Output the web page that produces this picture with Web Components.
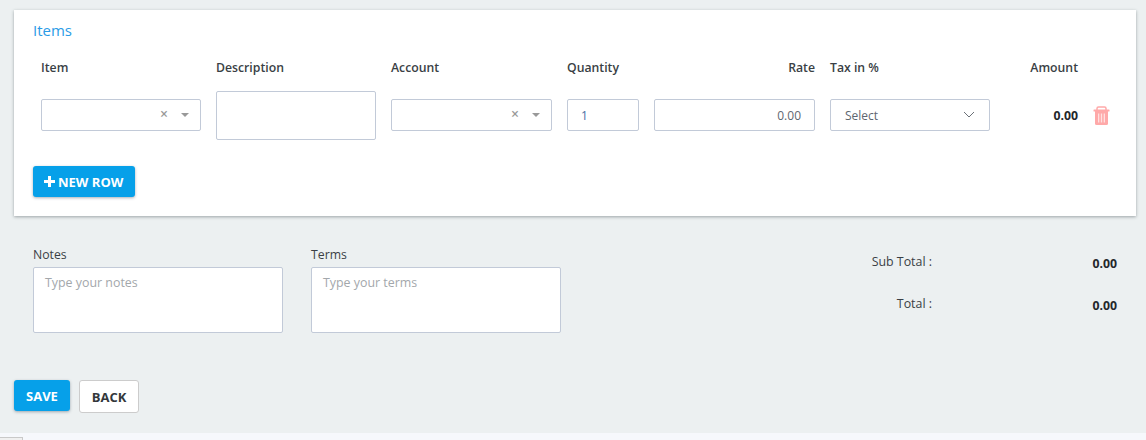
<!DOCTYPE html>
<html lang="en">
<head>
<meta charset="utf-8">
<title>Items</title>
<style>
  html, body { margin: 0; height: 440px; overflow: hidden; }
  body { background: #f6f8fc; font-family: "Open Sans", sans-serif; color: #3a3f45; }
</style>
</head>
<body>
<invoice-page>
  <items-card slot="card">
    <span slot="title">Items</span>
    <grid-label>Item</grid-label>
    <grid-label>Description</grid-label>
    <grid-label>Account</grid-label>
    <grid-label>Quantity</grid-label>
    <grid-label align="right">Rate</grid-label>
    <grid-label>Tax in %</grid-label>
    <grid-label align="right">Amount</grid-label>
    <span></span>

    <combo-box></combo-box>
    <text-box tall></text-box>
    <combo-box></combo-box>
    <text-box value="1" accent></text-box>
    <text-box value="0.00" align="right"></text-box>
    <tax-select>Select</tax-select>
    <amount-value>0.00</amount-value>
    <trash-icon></trash-icon>

    <action-button slot="action" kind="primary" plus>NEW ROW</action-button>
  </items-card>

  <note-box slot="notes" label="Notes" placeholder="Type your notes"></note-box>
  <note-box slot="notes" label="Terms" placeholder="Type your terms"></note-box>

  <total-line slot="totals" label="Sub Total :" value="0.00"></total-line>
  <total-line slot="totals" label="Total :" value="0.00"></total-line>

  <action-button slot="buttons" kind="primary">SAVE</action-button>
  <action-button slot="buttons" kind="plain">BACK</action-button>
</invoice-page>

<script>
// small helper so each element just declares its css and markup
function define(name, css, html) {
  customElements.define(name, class extends HTMLElement {
    constructor() {
      super();
      const root = this.attachShadow({ mode: "open" });
      root.innerHTML = `<style>${css}</style>${typeof html === "function" ? html(this) : html}`;
    }
  });
}

define("invoice-page", `
  :host { display: block; height: 433px; background: #ecf0f1; padding: 10px 10px 0 14px; box-sizing: border-box; position: relative; }
  .bottom { display: flex; justify-content: space-between; padding: 31px 0 0 19px; }
  .notes { display: flex; gap: 28px; }
  .totals { width: 246px; margin-right: 19px; padding-top: 7px; }
  .buttons { display: flex; align-items: flex-start; gap: 9px; margin-top: 42px; }
  .corner { position: absolute; left: 0; top: 437px; width: 23px; height: 3px; border: 1px solid #c9c9c9; border-left: 0; border-bottom: 0; background: #f0f0f0; box-sizing: border-box; }
`, `
  <slot name="card"></slot>
  <div class="bottom">
    <div class="notes"><slot name="notes"></slot></div>
    <div class="totals"><slot name="totals"></slot></div>
  </div>
  <div class="buttons"><slot name="buttons"></slot></div>
  <div class="corner"></div>
`);

define("items-card", `
  :host { display: block; width: 1122px; height: 206px; background: #fff; box-sizing: border-box; padding: 10px 19px 0; box-shadow: 0 1px 3px rgba(60,70,75,.45); }
  .title { font-size: 15px; line-height: 20px; color: #2a9be6; }
  .grid { display: grid; grid-template-columns: 160px 160px 161px 72px 161px 160px 73px 24px; column-gap: 15px; row-gap: 0; margin: 0 0 0 8px; grid-template-rows: 28px 60px; padding-top: 17px; align-items: center; }
  .action { margin-top: 21px; }
`, `
  <div class="title"><slot name="title"></slot></div>
  <div class="grid"><slot></slot></div>
  <div class="action"><slot name="action"></slot></div>
`);

define("grid-label", `
  :host { display: block; font-size: 12.25px; font-weight: 600; line-height: 16px; color: #3a3f45; align-self: start; margin-top: 3px; }
  :host([align="right"]) { text-align: right; }
`, `<slot></slot>`);

define("combo-box", `
  :host { display: flex; align-items: center; justify-content: flex-end; height: 32px; box-sizing: border-box; background: #fff; border: 1px solid #c2cad8; border-radius: 2px; padding-right: 11px; }
  .x { font-size: 14px; font-weight: 600; line-height: 14px; color: #999; margin-right: 13px; margin-top: -3px; }
  .arrow { width: 0; height: 0; border: 4px solid transparent; border-top-color: #999; border-bottom: 0; margin-top: -1px; }
`, `<span class="x">×</span><span class="arrow"></span>`);

define("text-box", `
  :host { display: flex; align-items: center; height: 32px; box-sizing: border-box; background: #fff; border: 1px solid #c2cad8; border-radius: 2px; padding: 0 13px; font-size: 12px; color: #5e6670; }
  :host([tall]) { height: 49px; margin-top: 1px; }
  :host([align="right"]) { justify-content: flex-end; }
  :host([accent]) { color: #4a6fa5; }
`, el => `<span>${el.getAttribute("value") || ""}</span>`);

define("tax-select", `
  :host { display: flex; align-items: center; justify-content: space-between; height: 32px; box-sizing: border-box; background: #fff; border: 1px solid #c2cad8; border-radius: 2px; padding: 0 14px 0 14px; font-size: 12px; color: #5e6670; }
  svg { display: block; margin-top: -1px; }
`, `<slot></slot><svg width="12" height="7" viewBox="0 0 12 7"><path d="M1 1l5 5 5-5" fill="none" stroke="#6b7178" stroke-width="1"/></svg>`);

define("amount-value", `
  :host { display: block; text-align: right; font-size: 12.25px; font-weight: 700; color: #23272b; }
`, `<slot></slot>`);

// slots are a pale pink rather than cut out, the reference icon is soft there
define("trash-icon", `
  :host { display: block; margin-left: 0; line-height: 0; }
`, `<svg width="17" height="19" viewBox="0 0 17 19">
  <path d="M4 4V2.500A1.500 1.500 0 0 1 5.500 1h6A1.500 1.500 0 0 1 13 2.500V4" fill="none" stroke="#ffa9a9" stroke-width="1.500"/>
  <rect x="0.500" y="3.500" width="16" height="2" rx=".5" fill="#ffa9a9"/>
  <path d="M2 5h13v12.500a1.500 1.500 0 0 1-1.500 1.500h-10A1.500 1.500 0 0 1 2 17.500z" fill="#ffa9a9"/>
  <path d="M5 7.500h1.300v9H5zM7.850 7.500h1.300v9h-1.300zM10.700 7.500H12v9h-1.300z" fill="#ffe0e0"/>
</svg>`);

define("action-button", `
  :host { display: inline-flex; align-items: center; justify-content: center; box-sizing: border-box; border-radius: 3px; font-size: 13px; font-weight: 700; }
  :host([kind="primary"]) { height: 31px; padding: 0 12px; background: #06a0e9; color: #fff; box-shadow: 0 1px 3px rgba(40,60,80,.4); }
  :host([plus]) { padding: 0 12px 0 11px; }
  :host([kind="plain"]) { height: 33px; padding: 0 12px; background: #fff; color: #33373b; border: 1px solid #ccc; }
  svg { display: block; margin-right: 3px; }
`, el => `${el.hasAttribute("plus") ? `<svg width="11" height="11" viewBox="0 0 11 11"><path d="M4 0h3v4h4v3H7v4H4V7H0V4h4z" fill="#fff"/></svg>` : ""}<slot></slot>`);

define("note-box", `
  :host { display: block; width: 250px; }
  .label { font-size: 12.25px; line-height: 16px; color: #3a3f45; margin-bottom: 4px; }
  .area { height: 66px; box-sizing: border-box; background: #fff; border: 1px solid #c2cad8; border-radius: 2px; padding: 7px 11px; font-size: 12.4px; line-height: 16px; color: #a3a7ab; }
`, el => `<div class="label">${el.getAttribute("label")}</div><div class="area">${el.getAttribute("placeholder")}</div>`);

define("total-line", `
  :host { display: grid; grid-template-columns: 61px 1fr; align-items: start; height: 42px; font-size: 12.4px; color: #3a3f45; }
  .l { text-align: right; line-height: 16px; white-space: nowrap; }
  .v { text-align: right; font-size: 12.25px; font-weight: 700; color: #23272b; line-height: 16px; margin-top: 2px; }
`, el => `<span class="l">${el.getAttribute("label")}</span><span class="v">${el.getAttribute("value")}</span>`);
</script>
</body>
</html>
